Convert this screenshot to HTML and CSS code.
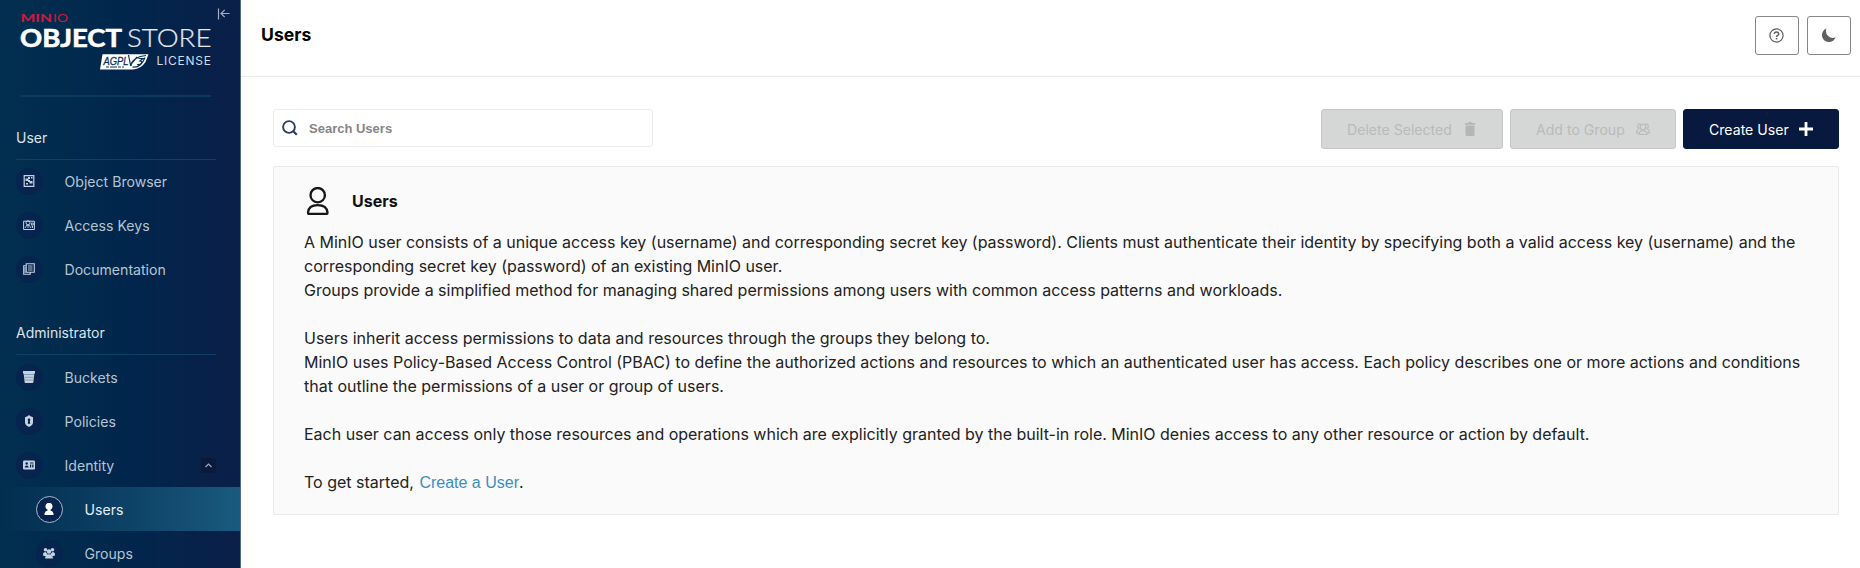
FILE: index.html
```html
<!DOCTYPE html>
<html lang="en">
<head>
<meta charset="utf-8">
<title>Users</title>
<link rel="stylesheet" href="styles.css">
</head>
<body>
<div class="app">
  <aside class="sidebar">
    <div class="brand">
      <svg class="logo" width="241" height="97" viewBox="0 0 241 97">
        <g class="logo-text">
          <text class="l-min" x="20.500" y="21.700" textLength="31.500" lengthAdjust="spacingAndGlyphs">MIN</text>
          <text class="l-io" x="53" y="21.700" textLength="15" lengthAdjust="spacingAndGlyphs">IO</text>
          <text class="l-object" x="20" y="46.7" textLength="102" lengthAdjust="spacingAndGlyphs">OBJECT</text>
          <text class="l-store" x="127" y="46.7" textLength="84.500" lengthAdjust="spacingAndGlyphs">STORE</text>
          <text class="l-license" x="156.5" y="65" textLength="54.500" lengthAdjust="spacing">LICENSE</text>
        </g>
        <path d="M102.500 54.200H148.500L145.500 62Q141 69 133 69.500H100Z" fill="#fff"/>
        <text class="l-agpl" x="103.500" y="64.500" textLength="25" lengthAdjust="spacingAndGlyphs">AGPL</text>
        <path d="M106 67h18" stroke="#0a3158" stroke-width="1" stroke-dasharray="3 1 7 1"/>
        <path d="M128.500 55l2 10 6.500-8M131 66c0-6 7-10 15-10.500M132.500 67c6 1 10-3 12.500-9.500M138.500 58.500h4.500l-3 2.500c3 0 2 4-3 3.500" fill="none" stroke="#0a3158" stroke-width="1.200"/>
        <path d="M20.500 96H211" stroke="#0f4065" stroke-width="1.300"/>
        <path d="M218.500 8.500v11M229.500 13.500h-8.500m3.700-3.700l-3.700 3.700 3.700 3.700" fill="none" stroke="#a2b0c3" stroke-width="1.200"/>
      </svg>
    </div>
    <nav>
      <h2 class="group">User</h2>
      <a class="item"><span class="dot"><svg viewBox="0 0 12 12"><path d="M1.200.7h9.600v10.600H1.200z" fill="none" stroke="currentColor" stroke-width="1.200"/><path d="M2.500 3.500h3v2.500h-3zM5 2h2v2H5zM6.500 6h3v2.500h-3zM5 5h2v2H5zM8 2h1.500v1.500H8zM3 8h2v1.500H3z" fill="currentColor"/></svg></span>Object Browser</a>
      <a class="item"><span class="dot"><svg viewBox="0 0 12 12"><path d="M.6 2.200h10.800v8.300H.6z" fill="none" stroke="currentColor"/><circle cx="5" cy="3.800" r="2" fill="none" stroke="currentColor"/><path d="M2 9l2-3h2l2 3M8.500 4h1.800v2H8.500zM8.500 7h1v2M5 6v3" fill="none" stroke="currentColor" stroke-width=".9"/></svg></span>Access Keys</a>
      <a class="item"><span class="dot"><svg viewBox="0 0 12 12"><path d="M3.200.700h8.100v8.600H3.200zM3 2.700H.7v8.600h6.500v-2" fill="none" stroke="currentColor" stroke-width="1.100"/><path d="M5 3h4.500M5 5h4.500M5 7h4.500M2 4v6" stroke="currentColor" stroke-width=".9"/></svg></span>Documentation</a>
      <h2 class="group admin">Administrator</h2>
      <a class="item"><span class="dot"><svg viewBox="0 0 12 12"><path d="M0 0h12v2.500H0zM.6 2h10.800l-1 9q-.1 1-1 1H2.600q-1 0-1-1z" fill="currentColor"/><path d="M1 3.500h10M1.500 6.300h9M1.800 9h8.500" stroke="#5d7397" stroke-width=".6"/></svg></span>Buckets</a>
      <a class="item"><span class="dot"><svg viewBox="0 0 12 12"><path d="M6 0l1.500 1.300 2.500.9v5.300Q10 10 6 12 2 10 2 7.500V2.200l2.500-.9z" fill="currentColor"/><circle cx="6" cy="4.700" r="1.300" fill="#07204b"/><path d="M5.400 5h1.200l.7 3.700H4.700z" fill="#07204b"/></svg></span>Policies</a>
      <a class="item"><span class="dot"><svg viewBox="0 0 12 12"><rect y="1.500" width="12" height="9" rx="1.200" fill="currentColor"/><circle cx="3.700" cy="4.500" r="1.200" fill="#07204b"/><path d="M1.700 8.500q0-2 2-2t2 2zM7 3.500h3.500v1H7zM7 5.500h1.200v3H7zM9.200 5.500h1.300v3H9.200z" fill="#07204b"/></svg></span>Identity<span class="chevron"><svg viewBox="0 0 15 15"><path d="M4.500 9l3-3 3 3" fill="none" stroke="#9baabd" stroke-width="1.200"/></svg></span></a>
      <a class="item sub active"><span class="dot"><svg viewBox="0 0 12 12"><circle cx="6" cy="3.300" r="3.500" fill="currentColor"/><path d="M1.500 12V10.500Q2 7.800 4.500 7.500V6h3v1.500Q10 7.800 10.500 10.500V12z" fill="currentColor"/></svg></span>Users</a>
      <a class="item sub"><span class="dot"><svg viewBox="0 0 12 12" fill="currentColor"><circle cx="2.500" cy="2.800" r="1.800"/><circle cx="9.500" cy="2.800" r="1.800"/><circle cx="6" cy="4.500" r="2.200"/><path d="M0 7.500Q0 5 2.500 5l2 2-1.500 2H.5zM12 7.500Q12 5 9.500 5l-2 2L9 9h2.500zM2 11.500Q2.500 7.300 6 7.300T10 11.500z"/></svg></span>Groups</a>
    </nav>
  </aside>
  <main class="main">
    <header class="header">
      <h1>Users</h1>
      <div class="tools">
        <button class="tool"><svg width="15" height="15" viewBox="0 0 15 15"><circle cx="7.500" cy="7.500" r="6.600" fill="none" stroke="#5e6160" stroke-width="1.200"/><path d="M5.200 5.800Q5.400 3.900 7.500 3.900T9.700 5.900Q9.700 7 8.500 7.500 7.600 8 7.600 9" fill="none" stroke="#5e6160" stroke-width="1.500"/><path d="M6.800 9.900h1.600v1.500H6.800z" fill="#5e6160"/></svg></button>
        <button class="tool"><svg width="15" height="15" viewBox="0 0 15 15"><path d="M5.300.6A7 7 0 1 0 14.600 9.300 7 7 0 0 1 5.300.6z" fill="#5e6160"/></svg></button>
      </div>
    </header>
    <section class="content">
      <div class="actions">
        <label class="search"><svg width="16" height="16" viewBox="0 0 16 16"><circle cx="7" cy="7" r="5.900" fill="none" stroke="#2c3d63" stroke-width="1.900"/><path d="M11 11l3.800 3.800" stroke="#2c3d63" stroke-width="2.200"/></svg><input type="text" placeholder="Search Users"></label>
        <div class="buttons">
          <button class="btn delete" disabled>Delete Selected<svg width="14" height="14" viewBox="0 0 14 14"><path d="M2 1h3l.7-1h2.600L9 1h3v1.800H2zM2.500 3.500h9v9q0 1.500-1.500 1.500H4q-1.500 0-1.500-1.500z" fill="#b4b5b5"/></svg></button>
          <button class="btn add" disabled>Add to Group<svg width="14" height="14" viewBox="0 0 14 14" fill="none" stroke="#b8b9b9" stroke-width="1.100"><circle cx="7" cy="5" r="2.800"/><path d="M3 12.500Q3 8.700 7 8.700t4 3.800zM3.500 6.500A2.300 2.300 0 1 1 5 2.200M9 2.200a2.300 2.300 0 1 1 1.500 4.300M2.500 7Q.5 7.500.5 11H3M11.500 7q2 .5 2 4H11"/></svg></button>
          <button class="btn create">Create User<svg width="14" height="14" viewBox="0 0 14 14"><path d="M7 0v14M0 7h14" stroke="#fff" stroke-width="2.800"/></svg></button>
        </div>
      </div>
      <article class="card">
        <div class="card-title"><svg width="28" height="28" viewBox="0 0 28 28" fill="none" stroke="#161616" stroke-width="2.300"><circle cx="13.700" cy="8.200" r="7.200"/><path d="M5.200 27Q4 27 4 25.500 4.700 18.200 13.700 18.200T23.500 25.500Q23.500 27 22.300 27z"/></svg><h2>Users</h2></div>
        <div class="help">
          <p><span class="tight">A MinIO user consists of a unique access key (username) and corresponding secret key (password). Clients must authenticate their identity by specifying both a valid access key (username) and the<br>corresponding secret key (password) of an existing MinIO user.<br>Groups provide a simplified method for managing shared permissions among users with common access patterns and workloads.</span></p>
          <p>Users inherit access permissions to data and resources through the groups they belong to.<br>MinIO uses Policy-Based Access Control (PBAC) to define the authorized actions and resources to which an authenticated user has access. Each policy describes one or more actions and conditions<br>that outline the permissions of a user or group of users.</p>
          <p><span class="tight">Each user can access only those resources and operations which are explicitly granted by the built-in role. MinIO denies access to any other resource or action by default.</span></p>
          <p>To get started, <a class="link">Create a User</a>.</p>
        </div>
      </article>
    </section>
  </main>
</div>
</body>
</html>
```
FILE: styles.css
```css
* { box-sizing: border-box; }
body { margin: 0; font-family: Inter, "Liberation Sans", sans-serif; color: #222; background: #fff; }
h1, h2, p { margin: 0; }
button { font-family: inherit; }
.app { display: flex; height: 568px; overflow: hidden; }
.sidebar { flex: none; width: 241px; background: linear-gradient(90deg, #022f4f 0%, #01254c 58%, #0b1f48 100%); border-right: 1px solid #50688a; }
.brand { height: 97px; }
.logo { display: block; }
.logo-text { font-family: Lato, sans-serif; fill: #fff; }
.l-min { font-size: 11px; font-weight: 900; fill: #c51b3f; }
.l-io { font-size: 11px; fill: #c51b3f; }
.l-object { font-size: 24.500px; font-weight: 700; stroke: #fff; stroke-width: .6px; }
.l-store { font-size: 24.500px; font-weight: 300; fill: #e3e8ee; stroke: #e3e8ee; stroke-width: .2px; }
.l-license { font-family: Inter, sans-serif; font-size: 12px; fill: #d3dbe4; }
.l-agpl { font: italic 400 11.500px "Liberation Sans", sans-serif; fill: #0a3158; stroke: #0a3158; stroke-width: .3px; }
.group { height: 41px; margin: 22px 24px 0 16px; font-size: 14px; line-height: 37px; font-weight: 400; color: #dbe3ea; border-bottom: 1px solid #0f4065; }
.group + .item { margin-top: -1px; }
.group.admin { height: 42px; margin-top: 22px; line-height: 40px; }
.group.admin + .item { margin-top: 0; }
.item { display: flex; align-items: center; height: 44px; padding: 0 24px 0 15.500px; font-size: 14.100px; color: #b5c4d3; }
.dot { display: flex; align-items: center; justify-content: center; width: 27px; height: 27px; margin-right: 22px; border-radius: 50%; background: #06244d; color: #c5d2e2; }
.dot svg { width: 12px; height: 12px; }
.chevron { margin-left: auto; width: 15px; height: 15px; background: #0b1a3a; }
.chevron svg { display: block; }
.sub { padding-left: 35.500px; }
.active { color: #e5eef4; background: linear-gradient(90deg, rgba(24,96,130,0) 0%, #185b7e 100%); }
.active .dot { border: 1.500px solid #a9b9cc; color: #fff; }
.main { flex: 1; min-width: 0; }
.header { display: flex; align-items: center; justify-content: space-between; height: 77px; padding: 0 9.500px 6px 20px; border-bottom: 1px solid #eaeaea; }
.header h1 { margin-top: -1px; font-size: 17.600px; font-weight: 700; color: #000; }
.tools { display: flex; gap: 8px; }
.tool { display: flex; align-items: center; justify-content: center; width: 44px; height: 39px; padding: 0; border: 1px solid #868786; border-radius: 3px; background: #fff; }
.content { padding: 32px 21px 0 32px; }
.actions { display: flex; justify-content: space-between; height: 57px; }
.search { display: flex; align-items: center; gap: 11px; width: 380px; height: 38px; padding: 0 8px; border: 1px solid #eaeaea; border-radius: 3px; }
.search input { flex: 1; border: 0; outline: 0; padding: 0; background: none; font: 700 13px "Liberation Sans", Arial, sans-serif; }
.search input::placeholder { color: #858585; opacity: 1; }
.buttons { display: flex; gap: 7px; }
.btn { display: flex; align-items: center; justify-content: space-between; height: 40px; padding: 0 25px; border: 1px solid #c6c8c7; border-radius: 3px; background: #d5d7d7; color: #b9baba; font-size: 14.100px; }
.delete { width: 182px; }
.add { width: 166px; }
.create { width: 156px; border-color: #07193e; background: #07193e; color: #fff; }
.card { height: 349px; padding: 20px 30px; border: 1px solid #eaeaea; border-radius: 2px; background: #fafafa; }
.card-title { display: flex; align-items: center; gap: 20px; height: 28px; }
.card h2 { font-size: 16px; font-weight: 700; color: #111; }
.help { margin-top: 15px; font-size: 16px; line-height: 24px; white-space: nowrap; }
.help p + p { margin-top: 24px; }
.tight { letter-spacing: -.012px; }
.link { margin-left: 1px; color: #3a8fbd; font-family: "Liberation Sans", Arial, sans-serif; }
```
